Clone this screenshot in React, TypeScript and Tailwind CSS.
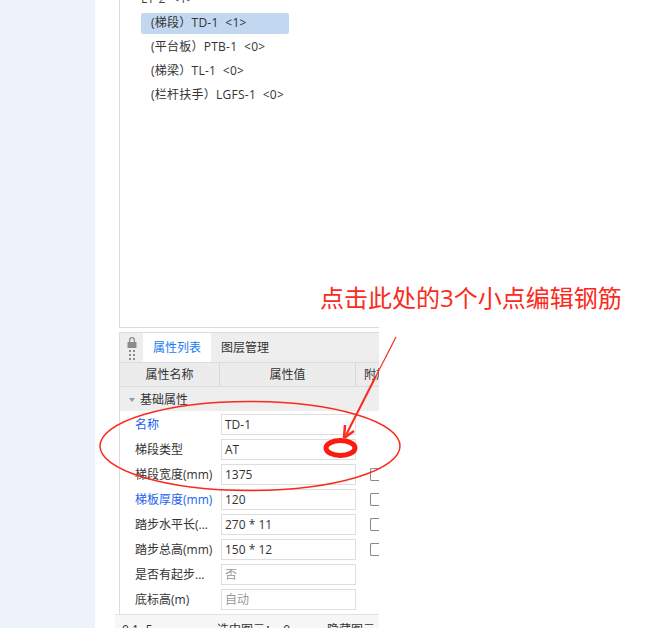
const font = { fontFamily: '"Open Sans", "Noto Sans CJK SC", sans-serif' };

const treeItems = [
  { label: "(梯段）TD-1  <1>", active: true },
  { label: "(平台板）PTB-1  <0>", active: false },
  { label: "(梯梁）TL-1  <0>", active: false },
  { label: "(栏杆扶手）LGFS-1  <0>", active: false },
];

const props = [
  { name: "名称", value: "TD-1", blue: true, check: false, muted: false },
  { name: "梯段类型", value: "AT", blue: false, check: false, muted: false },
  { name: "梯段宽度(mm)", value: "1375", blue: false, check: true, muted: false },
  { name: "梯板厚度(mm)", value: "120", blue: true, check: true, muted: false },
  { name: "踏步水平长(...", value: "270 * 11", blue: false, check: true, muted: false },
  { name: "踏步总高(mm)", value: "150 * 12", blue: false, check: true, muted: false },
  { name: "是否有起步...", value: "否", blue: false, check: false, muted: true },
  { name: "底标高(m)", value: "自动", blue: false, check: false, muted: true },
];

function LockIcon() {
  return (
    <svg width="10" height="24" viewBox="0 0 10 24" fill="#8b8b8b">
      <path d="M2 6V4a3 3 0 0 1 6 0v2h1.5v6h-9V6zm1.3 0h3.4V4a1.7 1.7 0 0 0-3.4 0z" />
      <rect x="2" y="14" width="2" height="2" />
      <rect x="6" y="14" width="2" height="2" />
      <rect x="2" y="18" width="2" height="2" />
      <rect x="6" y="18" width="2" height="2" />
      <rect x="2" y="22" width="2" height="2" />
      <rect x="6" y="22" width="2" height="2" />
    </svg>
  );
}

export default function App() {
  return (
    <div className="relative flex h-[628px] w-[666px] overflow-hidden bg-white text-[12px] text-[#333]" style={font}>
      <div className="h-full w-[95px] shrink-0 bg-[#eef3f9]" />

      <div className="flex h-full w-[284px] shrink-0 flex-col">
        {/* component tree */}
        <div className="ml-[24px] h-[328px] shrink-0 overflow-hidden border-b border-l border-[#dcdcdc] pl-[21px] pt-[1px]">
          <div className="-ml-[13px] -mt-[14px] flex h-[24px] items-center text-[#444]">
            <span className="mr-[5px] text-[8px] text-[#999]">▪</span>
            <span className="whitespace-pre tracking-[0.25px]">LT-2  &lt;1&gt;</span>
          </div>
          {treeItems.map((item) => (
            <div
              key={item.label}
              className={
                item.active
                  ? "my-[1.5px] flex h-[21px] w-[148px] items-center rounded-[2px] bg-[#c2d8f0] pl-[10px]"
                  : "flex h-[24px] w-[148px] items-center pl-[10px]"
              }
            >
              <span className="whitespace-pre tracking-[0.25px]">{item.label}</span>
            </div>
          ))}
        </div>

        {/* property panel */}
        <div className="ml-[24px] mt-[4px] h-[282px] shrink-0 border-l border-[#dcdcdc]">
          <div className="flex h-[30px] border-t border-[#dcdcdc] bg-[#eeeeee]">
            <div className="flex w-[23px] justify-center pt-[3px]">
              <LockIcon />
            </div>
            <div className="flex w-[68px] items-center justify-center bg-white text-[#1a7cf0]">属性列表</div>
            <div className="flex w-[68px] items-center justify-center">图层管理</div>
          </div>
          <div className="flex h-[25px] border-y border-[#dcdcdc] bg-[#ececec] text-center">
            <div className="flex w-[100px] items-center justify-center border-r border-[#d8d8d8]">属性名称</div>
            <div className="flex w-[136px] items-center justify-center border-r border-[#d8d8d8]">属性值</div>
            <div className="flex min-w-0 flex-1 items-center overflow-hidden whitespace-nowrap pl-[8px]">附加</div>
          </div>
          <div className="flex h-[24px] items-center bg-[#eeeeee] pl-[9px] pt-[1px]">
            <span className="mr-[5px] h-0 w-0 border-x-[3px] border-t-[4px] border-x-transparent border-t-[#999]" />
            基础属性
          </div>
          <div className="flex flex-col gap-[4px] pt-[3px]">
            {props.map((p) => (
              <div key={p.name} className="flex h-[21px] items-center">
                <div className={p.blue ? "w-[101px] pl-[15px] text-[#1a5ff0]" : "w-[101px] pl-[15px]"}>{p.name}</div>
                <div
                  className={
                    p.muted
                      ? "flex h-[21px] w-[135px] items-center border border-[#dedede] pl-[3px] text-[#999]"
                      : "flex h-[21px] w-[135px] items-center border border-[#dedede] pl-[3px]"
                  }
                >
                  {p.value}
                </div>
                {p.check && (
                  <div className="ml-[14px] h-[13px] w-[9px] rounded-l-[2px] border-y border-l border-[#888]" />
                )}
              </div>
            ))}
          </div>
        </div>

        {/* status bar */}
        <div className="ml-[20px] flex h-[14px] items-start overflow-hidden whitespace-nowrap border-t border-[#e2e2e2] bg-[#f7f7f7] pl-[7px] pt-[6px]">
          <span className="w-[95px]">0.1~5</span>
          <span className="w-[110px] whitespace-pre">选中图元：  0</span>
          <span>隐藏图元</span>
        </div>
      </div>

      {/* annotations */}
      <svg className="absolute inset-0" width="666" height="628" viewBox="0 0 666 628" fill="none">
        <ellipse cx="250" cy="446" rx="150" ry="44.5" stroke="#fb2a1c" strokeWidth="1.5" />
        <ellipse cx="340.5" cy="448" rx="14.5" ry="7.5" stroke="#fb1a10" strokeWidth="5" />
        <path d="M396 337 L376 376" stroke="#fb2a1c" strokeWidth="1.2" />
        <path d="M376 376 L346 435" stroke="#fb2a1c" strokeWidth="2" />
        <path d="M344 438 L345 425 M344 438 L354 431" stroke="#fb2a1c" strokeWidth="2.5" />
      </svg>
      <div className="absolute left-[320px] top-[281px] whitespace-nowrap text-[24px] leading-[34px] text-[#fb2a1c]">
        点击此处的3个小点编辑钢筋
      </div>
    </div>
  );
}
